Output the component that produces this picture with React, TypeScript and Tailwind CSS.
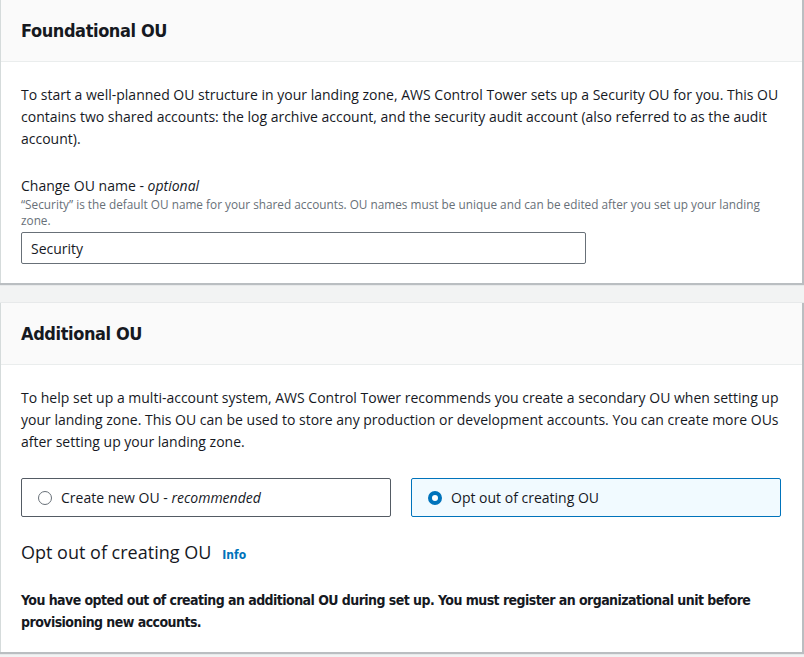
import { useState } from 'react';

const body = { fontFamily: '"Open Sans", "Noto Sans", sans-serif' };
const cond = { fontFamily: '"DejaVu Sans Condensed", "DejaVu Sans", sans-serif' };

const Card = ({ title, children }: { title: string; children: React.ReactNode }) => (
  <div className="bg-white border-l border-[#d5dbdb] mr-[2px] shadow-[1px_1px_1px_1px_rgba(84,91,100,0.35)]">
    <div className="h-[62px] flex items-center pl-[20px] pr-[21px] bg-[#fafafa] border-b border-[#eaeded]">
      <h2 className="text-[18px] font-bold text-[#16191f] tracking-[-0.4px]" style={cond}>
        {title}
      </h2>
    </div>
    <div className="pl-[20px] pr-[21px] pt-[22px] pb-[19px]">{children}</div>
  </div>
);

const Radio = ({ checked, label, onClick }: { checked: boolean; label: React.ReactNode; onClick: () => void }) => (
  <button
    onClick={onClick}
    className={`flex-1 h-[39px] flex items-center gap-[9px] px-[16px] rounded-[2px] border text-left ${
      checked ? 'border-[#0073bb] bg-[#f1faff]' : 'border-[#545b64] bg-white'
    }`}
  >
    {checked ? (
      <span className="w-[14px] h-[14px] rounded-full border-[4px] border-[#0073bb] bg-white" />
    ) : (
      <span className="w-[14px] h-[14px] rounded-full border border-[#687078] bg-white" />
    )}
    <span className="text-[14px] text-[#16191f]">{label}</span>
  </button>
);

export default function App() {
  const [choice, setChoice] = useState<'new' | 'opt'>('opt');
  const [name, setName] = useState('Security');

  return (
    <div className="min-h-[657px] bg-[#f2f3f3] text-[#16191f]" style={body}>
      <Card title="Foundational OU">
        <p className="text-[14px] leading-[22px]">
          To start a well-planned OU structure in your landing zone, AWS Control Tower sets up a Security OU for you. This OU
          contains two shared accounts: the log archive account, and the security audit account (also referred to as the audit
          account).
        </p>
        <div className="mt-[26px]">
          <label className="block text-[14px] leading-[20px]">
            Change OU name - <i>optional</i>
          </label>
          <p className="text-[11.8px] leading-[16px] text-[#687078]">
            “Security” is the default OU name for your shared accounts. OU names must be unique and can be edited after you set up your landing
            zone.
          </p>
          <input
            value={name}
            onChange={(e) => setName(e.target.value)}
            className="mt-[4px] w-[565px] h-[32px] px-[9px] text-[14px] border border-[#687078] rounded-[2px] outline-none"
          />
        </div>
      </Card>

      <div className="h-[20px]" />

      <Card title="Additional OU">
        <p className="text-[14px] leading-[22px]">
          To help set up a multi-account system, AWS Control Tower recommends you create a secondary OU when setting up
          your landing zone. This OU can be used to store any production or development accounts. You can create more OUs
          after setting up your landing zone.
        </p>
        <div className="flex gap-[20px] mt-[25px]">
          <Radio
            checked={choice === 'new'}
            onClick={() => setChoice('new')}
            label={
              <>
                Create new OU - <i>recommended</i>
              </>
            }
          />
          <Radio checked={choice === 'opt'} onClick={() => setChoice('opt')} label="Opt out of creating OU" />
        </div>
        <div className="flex items-baseline gap-[11px] mt-[22px]">
          <h3 className="text-[18px] leading-[26px]">Opt out of creating OU</h3>
          <a className="text-[12px] font-bold text-[#0073bb]" style={cond} href="#">
            Info
          </a>
        </div>
        <p className="mt-[24px] text-[14px] leading-[22px] font-bold tracking-[-0.55px]" style={cond}>
          You have opted out of creating an additional OU during set up. You must register an organizational unit before
          provisioning new accounts.
        </p>
      </Card>
    </div>
  );
}
